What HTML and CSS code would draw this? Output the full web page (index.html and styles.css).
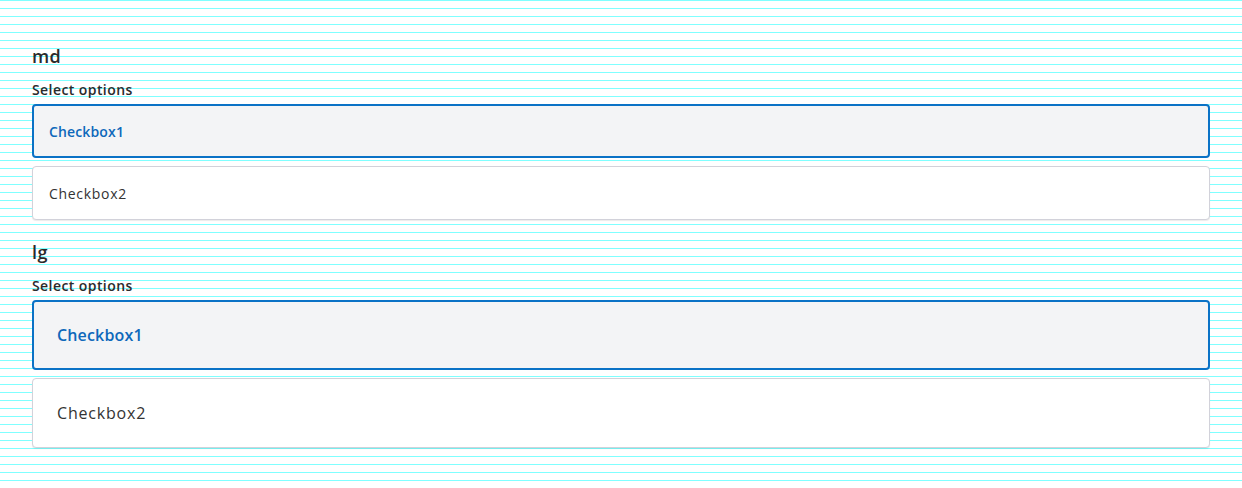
FILE: index.html
```html
<!DOCTYPE html>
<html>
<head>
<meta charset="utf-8">
<link rel="stylesheet" href="styles.css">
</head>
<body>
<main class="page">
  <section class="group group-md">
    <h2 class="size-title">md</h2>
    <div class="field">
      <div class="field-label">Select options</div>
      <div class="options">
        <div class="option option-selected">Checkbox1</div>
        <div class="option">Checkbox2</div>
      </div>
    </div>
  </section>
  <section class="group group-lg">
    <h2 class="size-title">lg</h2>
    <div class="field">
      <div class="field-label">Select options</div>
      <div class="options">
        <div class="option option-selected">Checkbox1</div>
        <div class="option">Checkbox2</div>
      </div>
    </div>
  </section>
</main>
</body>
</html>
```
FILE: styles.css
```css
html, body {
  margin: 0;
  padding: 0;
}
body {
  width: 1242px;
  height: 488px;
  overflow: hidden;
  font-family: "Open Sans", "Liberation Sans", sans-serif;
  color: #2b2b2b;
  background-color: #ffffff;
  background-image: repeating-linear-gradient(to bottom, #80ffff 0, #80ffff 1px, #ffffff 1px, #ffffff 8px);
}
.page {
  padding: 44px 32px 0 32px;
  display: flex;
  flex-direction: column;
  gap: 20px;
}
.group {
  display: flex;
  flex-direction: column;
  gap: 12px;
}
.size-title {
  margin: 0;
  font-size: 18px;
  line-height: 24px;
  font-weight: 600;
  letter-spacing: 0.02em;
  color: #2b2b2b;
}
.field {
  display: flex;
  flex-direction: column;
  gap: 4px;
}
.field-label {
  font-size: 14px;
  line-height: 20px;
  font-weight: 600;
  letter-spacing: 0.03em;
  color: #2b2b2b;
}
.options {
  display: flex;
  flex-direction: column;
  gap: 8px;
}
.option {
  box-sizing: border-box;
  display: flex;
  align-items: center;
  height: 54px;
  padding: 0 16px;
  border: 1px solid #d2d2da;
  border-radius: 4px;
  background: #ffffff;
  box-shadow: 0 1px 1px rgba(0, 0, 0, 0.08);
  font-size: 14px;
  letter-spacing: 0.05em;
  color: #333333;
}
.option-selected {
  border: 2px solid #0a72c6;
  padding: 0 15px;
  background: #f3f4f6;
  color: #0d68bb;
  font-weight: 600;
  letter-spacing: 0.01em;
  box-shadow: none;
}
.group-lg .option {
  height: 70px;
  padding: 0 24px;
  font-size: 16px;
}
.group-lg .option-selected {
  padding: 0 23px;
}
```
